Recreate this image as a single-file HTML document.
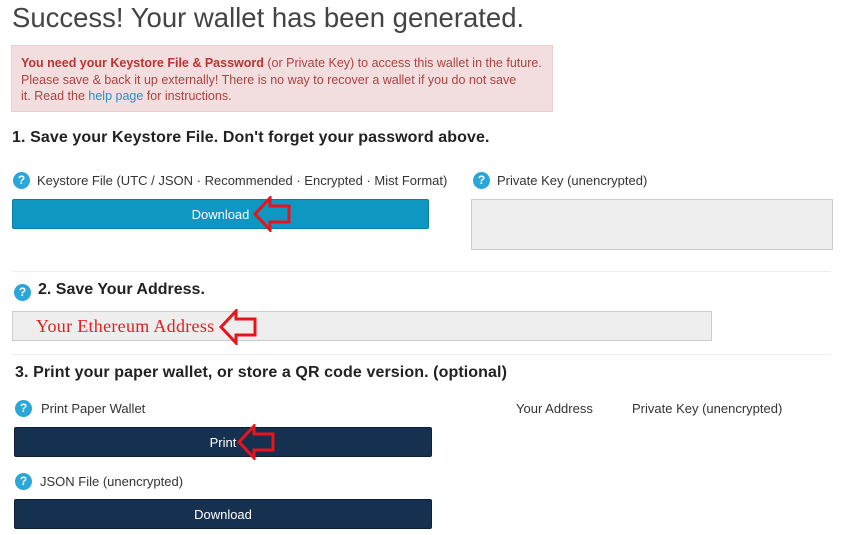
<!DOCTYPE html>
<html><head><meta charset="utf-8"><style>
body{margin:0;width:846px;height:535px;background:#fff;font-family:"Liberation Sans",sans-serif;position:relative;overflow:hidden;color:#333}
.a{position:absolute;white-space:nowrap}
.q{position:absolute;width:17px;height:17px;border-radius:50%;background:#2aa6d9;color:#fff;font:bold 12px/17px "Liberation Sans",sans-serif;text-align:center}
.btn{position:absolute;color:#fff;font-size:13px;text-align:center;border-radius:2px}
.arr{position:absolute;width:40px;height:36px}
</style></head><body>
<div class="a" style="left:12px;top:2px;font-size:27.5px;color:#444">Success! Your wallet has been generated.</div>
<div class="a" style="left:11px;top:45px;width:542px;height:67px;background:#f2dede;border:1px solid #ebccd1;box-sizing:border-box"></div>
<div class="a" style="left:21px;top:55px;font-size:12.5px;line-height:16.5px;color:#a94442">
<b style="color:#b33">You need your Keystore File &amp; Password</b> (or Private Key) to access this wallet in the future.<br>Please save &amp; back it up externally! There is no way to recover a wallet if you do not save<br>it. Read the <span style="color:#2a8fbd">help page</span> for instructions.</div>
<div class="a" style="left:12px;top:129px;font-size:16px;font-weight:bold;color:#222;letter-spacing:0.1px">1. Save your Keystore File. Don't forget your password above.</div>
<div class="q" style="left:13px;top:172px">?</div>
<div class="a" style="left:37px;top:173px;font-size:13px">Keystore File (UTC / JSON · Recommended · Encrypted · Mist Format)</div>
<div class="q" style="left:473px;top:172px">?</div>
<div class="a" style="left:497px;top:173px;font-size:13px">Private Key (unencrypted)</div>
<div class="btn" style="left:12px;top:199px;width:417px;height:30px;line-height:30px;background:#0e97c0;border:1px solid #0a7ea3;box-sizing:border-box">Download</div>
<div class="a" style="left:471px;top:199px;width:362px;height:51px;background:#eee;border:1px solid #ccc;box-sizing:border-box"></div>
<div class="a" style="left:12px;top:271px;width:819px;height:1px;background:#eee"></div>
<div class="q" style="left:14px;top:284px">?</div>
<div class="a" style="left:38px;top:281px;font-size:16px;font-weight:bold;color:#222">2. Save Your Address.</div>
<div class="a" style="left:12px;top:311px;width:700px;height:30px;background:#eee;border:1px solid #ccc;box-sizing:border-box"></div>
<div class="a" style="left:36px;top:316px;font-family:'Liberation Serif',serif;font-size:18px;color:#e02020;letter-spacing:0.3px">Your Ethereum Address</div>
<div class="a" style="left:12px;top:354px;width:819px;height:1px;background:#eee"></div>
<div class="a" style="left:15px;top:364px;font-size:16px;font-weight:bold;color:#222;letter-spacing:0.1px">3. Print your paper wallet, or store a QR code version. (optional)</div>
<div class="q" style="left:15px;top:400px">?</div>
<div class="a" style="left:41px;top:401px;font-size:13px">Print Paper Wallet</div>
<div class="a" style="left:516px;top:401px;font-size:13px">Your Address</div>
<div class="a" style="left:632px;top:401px;font-size:13px">Private Key (unencrypted)</div>
<div class="btn" style="left:14px;top:427px;width:418px;height:30px;line-height:30px;background:#163050;border:1px solid #0d2038;box-sizing:border-box">Print</div>
<div class="q" style="left:15px;top:473px">?</div>
<div class="a" style="left:40px;top:474px;font-size:13px">JSON File (unencrypted)</div>
<div class="btn" style="left:14px;top:499px;width:418px;height:30px;line-height:30px;background:#163050;border:1px solid #0d2038;box-sizing:border-box">Download</div>
<svg class="arr" style="left:253px;top:196px" viewBox="0 0 40 36"><path d="M2 18 L17 2 L17 10 L36 10 L36 26 L17 26 L17 34 Z" fill="none" stroke="#e8141c" stroke-width="3"/></svg>
<svg class="arr" style="left:219px;top:309px" viewBox="0 0 40 36"><path d="M2 18 L17 2 L17 10 L36 10 L36 26 L17 26 L17 34 Z" fill="none" stroke="#e8141c" stroke-width="3"/></svg>
<svg class="arr" style="left:237px;top:424px" viewBox="0 0 40 36"><path d="M2 18 L17 2 L17 10 L36 10 L36 26 L17 26 L17 34 Z" fill="none" stroke="#e8141c" stroke-width="3"/></svg>
</body></html>
